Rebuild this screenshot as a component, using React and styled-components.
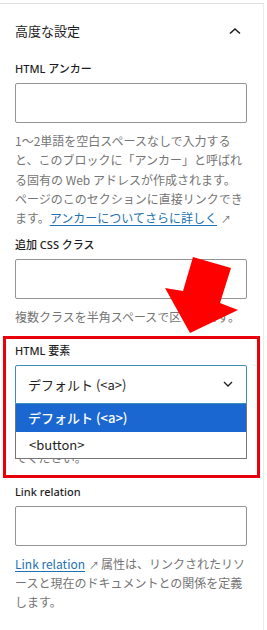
import React from "react"
import styled, { createGlobalStyle } from "styled-components"

const GlobalStyle = createGlobalStyle`
    html, body {
        margin: 0;
        padding: 0;
        background: #fff;
    }
    body {
        font-family: "Noto Sans", "Noto Sans CJK JP", sans-serif;
        color: #1e1e1e;
        -webkit-font-smoothing: antialiased;
    }
`

const Page = styled.div`
    width: 267px;
    height: 630px;
    padding-top: 3px;
    box-sizing: border-box;
    overflow: hidden;
    position: relative;
`

const Panel = styled.div`
    width: 264px;
    box-sizing: border-box;
    border-top: 1px solid #e0e0e0;
    border-bottom: 1px solid #e0e0e0;
    border-right: 1px solid #ececec;
    padding: 0 16px 11px 15px;
`

const Header = styled.div`
    display: flex;
    align-items: center;
    justify-content: space-between;
    height: 20px;
    margin-top: 17px;
    margin-bottom: 20px;
`

const Title = styled.h2`
    margin: 0;
    font-family: "Noto Sans CJK JP", sans-serif;
    font-size: 13px;
    font-weight: 400;
    line-height: 20px;
    color: #1e1e1e;
`

const Toggle = styled.span`
    display: flex;
    width: 20px;
    margin-right: 2px;
    justify-content: center;
`

const Field = styled.div`
    margin-bottom: ${p => p.gap || 10}px;
`

const Label = styled.label`
    display: block;
    font-family: "Noto Sans", "Noto Sans CJK JP", sans-serif;
    font-size: 11px;
    font-weight: 500;
    line-height: 16px;
    margin-bottom: 6px;
    color: #1e1e1e;
`

const Input = styled.div`
    width: 100%;
    height: 40px;
    box-sizing: border-box;
    border: 1px solid #949494;
    border-radius: 2px;
    background: #fff;
`

const Help = styled.p`
    margin: ${p => p.top ?? 8}px 0 0;
    font-family: "Noto Sans CJK JP", sans-serif;
    font-size: 12px;
    line-height: 19.3px;
    color: #757575;
`

const Link = styled.a`
    color: #2271b1;
    text-decoration: underline;
    text-underline-offset: 2px;
`

const Ext = styled.span`
    display: inline-block;
    font-size: 10px;
    line-height: 12px;
    margin: 0 2px 0 4px;
    color: #757575;
`

const Highlight = styled.div`
    border: 3px solid #e8000b;
    margin: 0 0 6px -12px;
    width: 257px;
    box-sizing: border-box;
    padding: 4px 10px 7px 9px;
`

const SelectWrap = styled.div`
    position: relative;
`

const Select = styled.div`
    height: 39px;
    box-sizing: border-box;
    border: 1px solid #3d8fb8;
    border-radius: 2px 2px 0 0;
    display: flex;
    align-items: center;
    justify-content: space-between;
    padding: 0 13px 0 12px;
    font-family: "Noto Sans CJK JP", sans-serif;
    font-size: 13px;
    color: #1e1e1e;
`

const Menu = styled.ul`
    position: absolute;
    top: 39px;
    left: 0;
    right: 0;
    margin: 0;
    padding: 0;
    list-style: none;
    background: #fff;
    border: 1px solid #767676;
    border-top: none;
    z-index: 2;
`

const Option = styled.li`
    height: ${p => p.selected ? 28 : 26}px;
    display: flex;
    align-items: center;
    padding-left: ${p => p.selected ? 12 : 13}px;
    font-family: "Noto Sans CJK JP", sans-serif;
    font-size: 13px;
    font-weight: ${p => p.selected ? 500 : 400};
    background: ${p => p.selected ? "#1a67d2" : "#fff"};
    color: ${p => p.selected ? "#fff" : "#1e1e1e"};
`

const Arrow = styled.svg`
    position: absolute;
    left: 163px;
    top: 255px;
    z-index: 3;
`

const Chevron = ({ up }) => (
    <svg width="12" height="8" viewBox="0 0 12 8">
        <path d={up ? "M1 6.5 6 2 11 6.5" : "M1 1.5 6 6 11 1.5"} fill="none" stroke="#1e1e1e" strokeWidth="1.6" />
    </svg>
)

export default function App() {
    return (
        <Page>
            <GlobalStyle />
            <Panel>
                <Header>
                    <Title>高度な設定</Title>
                    <Toggle><Chevron up /></Toggle>
                </Header>

                <Field gap={10}>
                    <Label>HTML アンカー</Label>
                    <Input />
                    <Help>
                        1〜2単語を空白スペースなしで入力すると、このブロックに「アンカー」と呼ばれる固有の Web アドレスが作成されます。ページのこのセクションに直接リンクできます。
                        <Link href="#">アンカーについてさらに詳しく</Link><Ext>↗</Ext>
                    </Help>
                </Field>

                <Field gap={9}>
                    <Label>追加 CSS クラス</Label>
                    <Input />
                    <Help>複数クラスを半角スペースで区切ります。</Help>
                </Field>

                <Highlight>
                    <Label>HTML 要素</Label>
                    <SelectWrap>
                        <Select>
                            <span>デフォルト (&lt;a&gt;)</span>
                            <svg width="10" height="6" viewBox="0 0 10 6">
                                <path d="M1 1 5 5 9 1" fill="none" stroke="#1e1e1e" strokeWidth="1.3" />
                            </svg>
                        </Select>
                        <Menu>
                            <Option selected>デフォルト (&lt;a&gt;)</Option>
                            <Option>&lt;button&gt;</Option>
                        </Menu>
                    </SelectWrap>
                    <Help top={6}>
                        リンクには &lt;a&gt; 要素、操作には<br />
                        &lt;button&gt; 要素を選ぶように設定し<br />
                        てください。
                    </Help>
                </Highlight>

                <Field gap={0}>
                    <Label>Link relation</Label>
                    <Input />
                    <Help>
                        <Link href="#">Link relation</Link><Ext>↗</Ext>属性は、リンクされたリソースと現在のドキュメントとの関係を定義します。
                    </Help>
                </Field>
            </Panel>
            <Arrow width="80" height="82" viewBox="0 0 80 82">
                <polygon points="30,2 68,13 57,48 75,55 27,78 2,33 20,36" fill="#f00" />
            </Arrow>
        </Page>
    )
}
